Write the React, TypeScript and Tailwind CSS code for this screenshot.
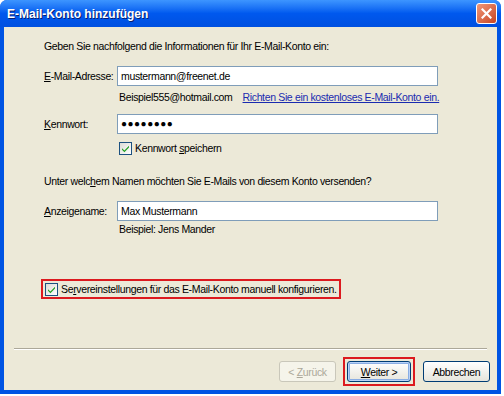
import React from "react";

const font = { fontFamily: '"Liberation Sans", Arial, sans-serif', letterSpacing: "-0.35px" };

function XpCheck() {
  return (
    <span className="flex h-[13px] w-[13px] shrink-0 items-center justify-center border border-[#1c5180] bg-gradient-to-br from-[#dcdcd7] to-white">
      <svg width="9" height="9" viewBox="0 0 9 9">
        <path d="M1 4.2 L3.4 6.6 L8 1.8 L8 3.6 L3.4 8.2 L1 5.8 Z" fill="#21a121" />
      </svg>
    </span>
  );
}

function Field({ u, rest, value, dots }: { u: string; rest: string; value: string; dots?: boolean }) {
  return (
    <div className="flex items-center">
      <span className="w-[73px] shrink-0 whitespace-nowrap">
        <span className="underline">{u}</span>
        {rest}
      </span>
      <div className="flex h-[20px] w-[321px] items-center border border-[#7f9db9] bg-white px-[3px]">
        {dots ? <span className="text-[10px] tracking-[0.5px]">●●●●●●●●</span> : value}
      </div>
    </div>
  );
}

function XpButton({ children, disabled, primary }: { children: React.ReactNode; disabled?: boolean; primary?: boolean }) {
  return (
    <button
      disabled={disabled}
      className={
        "flex h-[21px] w-full items-center justify-center rounded-[3px] border bg-gradient-to-b " +
        (disabled
          ? "border-[#c9c7ba] from-[#f5f4ea] to-[#f5f4ea] text-[#aca899] "
          : "border-[#003c74] from-white to-[#e6e5dc] text-black ") +
        (primary ? "shadow-[inset_0_0_0_1px_#b8d2f8,inset_0_0_0_2px_#89ade4] " : "")
      }
    >
      <span className="whitespace-pre">{children}</span>
    </button>
  );
}

export default function App() {
  return (
    <div className="h-[396px] w-[504px] bg-white text-[10.5px] leading-[14px] text-black" style={font}>
      <div className="flex h-[394px] w-[501px] flex-col overflow-hidden rounded-t-[7px] bg-[#0054e3]">
        {/* title bar */}
        <div className="flex h-[27px] shrink-0 items-center justify-between bg-gradient-to-b from-[#3d95ff] via-[#0058ee] to-[#0050e0] pl-[7px] pr-[4px]">
          <span className="text-[12px] font-bold tracking-normal text-white [text-shadow:1px_1px_0_#0a1e6e]">
            E-Mail-Konto hinzufügen
          </span>
          <span className="flex h-[21px] w-[21px] items-center justify-center rounded-[3px] border border-white bg-gradient-to-br from-[#f09778] to-[#c74420]">
            <svg width="11" height="11" viewBox="0 0 11 11">
              <path d="M1.5 1.5 L9.5 9.5 M9.5 1.5 L1.5 9.5" stroke="white" strokeWidth="2.2" strokeLinecap="square" />
            </svg>
          </span>
        </div>

        {/* client */}
        <div className="mx-[4px] mb-[4px] flex flex-1 flex-col bg-[#ece9d8]">
          <div className="flex flex-col pl-[40px] pt-[12px]">
            <p>Geben Sie nachfolgend die Informationen für Ihr E-Mail-Konto ein:</p>

            <div className="mt-[13px]">
              <Field u="E" rest="-Mail-Adresse:" value="mustermann@freenet.de" />
            </div>
            <div className="mt-[4px] flex pl-[75px]">
              <span>Beispiel555@hotmail.com</span>
              <span className="ml-[10px] text-[#1a2bb0] underline">Richten Sie ein kostenloses E-Mail-Konto ein.</span>
            </div>

            <div className="mt-[10px]">
              <Field u="K" rest="ennwort:" value="" dots />
            </div>
            <div className="mt-[7px] flex items-center gap-[3px] pl-[75px]">
              <XpCheck />
              <span>
                Kennwort <span className="underline">s</span>peichern
              </span>
            </div>

            <p className="mt-[19px]">
              Unter welc<span className="underline">h</span>em Namen möchten Sie E-Mails von diesem Konto versenden?
            </p>

            <div className="mt-[13px]">
              <Field u="A" rest="nzeigename:" value="Max Mustermann" />
            </div>
            <p className="mt-[1px] pl-[75px]">Beispiel: Jens Mander</p>

            <div className="-ml-[3px] mt-[43px] flex h-[20px] items-center gap-[3px] self-start border-2 border-[#dc1a1f] pl-[2px] pr-[2px]">
              <XpCheck />
              <span className="whitespace-nowrap">
                Se<span className="underline">r</span>vereinstellungen für das E-Mail-Konto manuell konfigurieren.
              </span>
            </div>
          </div>

          <div className="mx-[10px] mt-[49px] border-t border-[#aca899] shadow-[0_1px_0_white]" />

          <div className="mt-[8px] flex items-center justify-end pr-[7px]">
            <div className="w-[57px]">
              <XpButton disabled>
                {"< "}
                <span className="underline">Z</span>urück
              </XpButton>
            </div>
            <div className="ml-[7px] flex h-[29px] w-[72px] items-center justify-center border-2 border-[#dc1a1f]">
              <div className="w-[64px]">
                <XpButton primary>
                  <span className="underline">W</span>
                  {"eiter >"}
                </XpButton>
              </div>
            </div>
            <div className="ml-[8px] w-[67px]">
              <XpButton>Abbrechen</XpButton>
            </div>
          </div>
        </div>
      </div>
    </div>
  );
}
